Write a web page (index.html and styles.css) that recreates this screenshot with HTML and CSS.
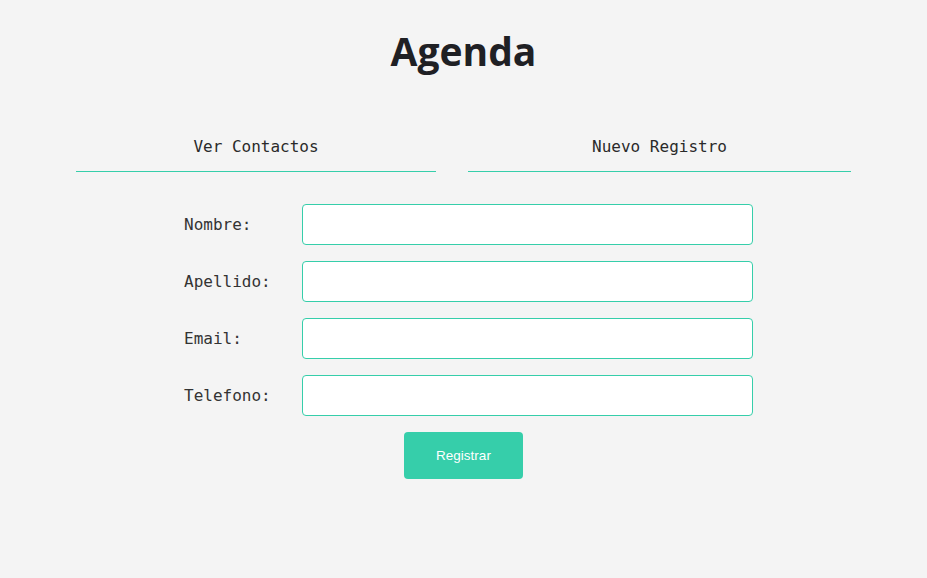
FILE: index.html
```html
<!DOCTYPE html>
<html lang="es">
<head>
<meta charset="utf-8">
<title>Agenda</title>
<link rel="stylesheet" href="styles.css">
</head>
<body>
<h1 class="title">Agenda</h1>
<nav class="tabs">
  <a class="tab">Ver Contactos</a>
  <a class="tab">Nuevo Registro</a>
</nav>
<form class="form">
  <div class="fields">
    <label class="label">Nombre:</label><input class="input" type="text">
    <label class="label">Apellido:</label><input class="input" type="text">
    <label class="label">Email:</label><input class="input" type="text">
    <label class="label">Telefono:</label><input class="input" type="text">
  </div>
  <div class="actions"><button class="btn" type="button">Registrar</button></div>
</form>
</body>
</html>
```
FILE: styles.css
```css
html, body { margin: 0; padding: 0; }
body {
  background: #f4f4f4;
  color: #222;
  width: 927px;
  height: 578px;
  font-family: "DejaVu Sans Mono", monospace;
}
.title {
  margin: 0;
  padding-top: 26px;
  text-align: center;
  font-family: "Open Sans", "Noto Sans", sans-serif;
  font-weight: 700;
  font-size: 39px;
  line-height: 50px;
  color: #1f2024;
}
.tabs {
  display: grid;
  grid-template-columns: 360px 383px;
  column-gap: 32px;
  justify-content: center;
  margin-top: 61px;
}
.tab {
  display: block;
  text-align: center;
  font-size: 16px;
  line-height: 20px;
  color: #2a2a2a;
  padding-bottom: 14px;
  border-bottom: 1px solid #36ceaa;
}
.form { margin-top: 32px; }
.fields {
  display: grid;
  grid-template-columns: 118px 451px;
  row-gap: 16px;
  justify-content: center;
  padding-left: 10px;
  align-items: center;
}
.label {
  font-size: 16px;
  color: #333;
  padding-bottom: 1px;
}
.input {
  box-sizing: border-box;
  height: 41px;
  margin: 0;
  border: 1px solid #36ceaa;
  border-radius: 4px;
  background: #fff;
}
.actions {
  display: flex;
  justify-content: center;
  margin-top: 16px;
}
.btn {
  width: 119px;
  height: 47px;
  border: none;
  border-radius: 4px;
  background: #36ceaa;
  color: #fff;
  font-family: "Liberation Sans", Arial, sans-serif;
  font-size: 13.5px;
}
```
